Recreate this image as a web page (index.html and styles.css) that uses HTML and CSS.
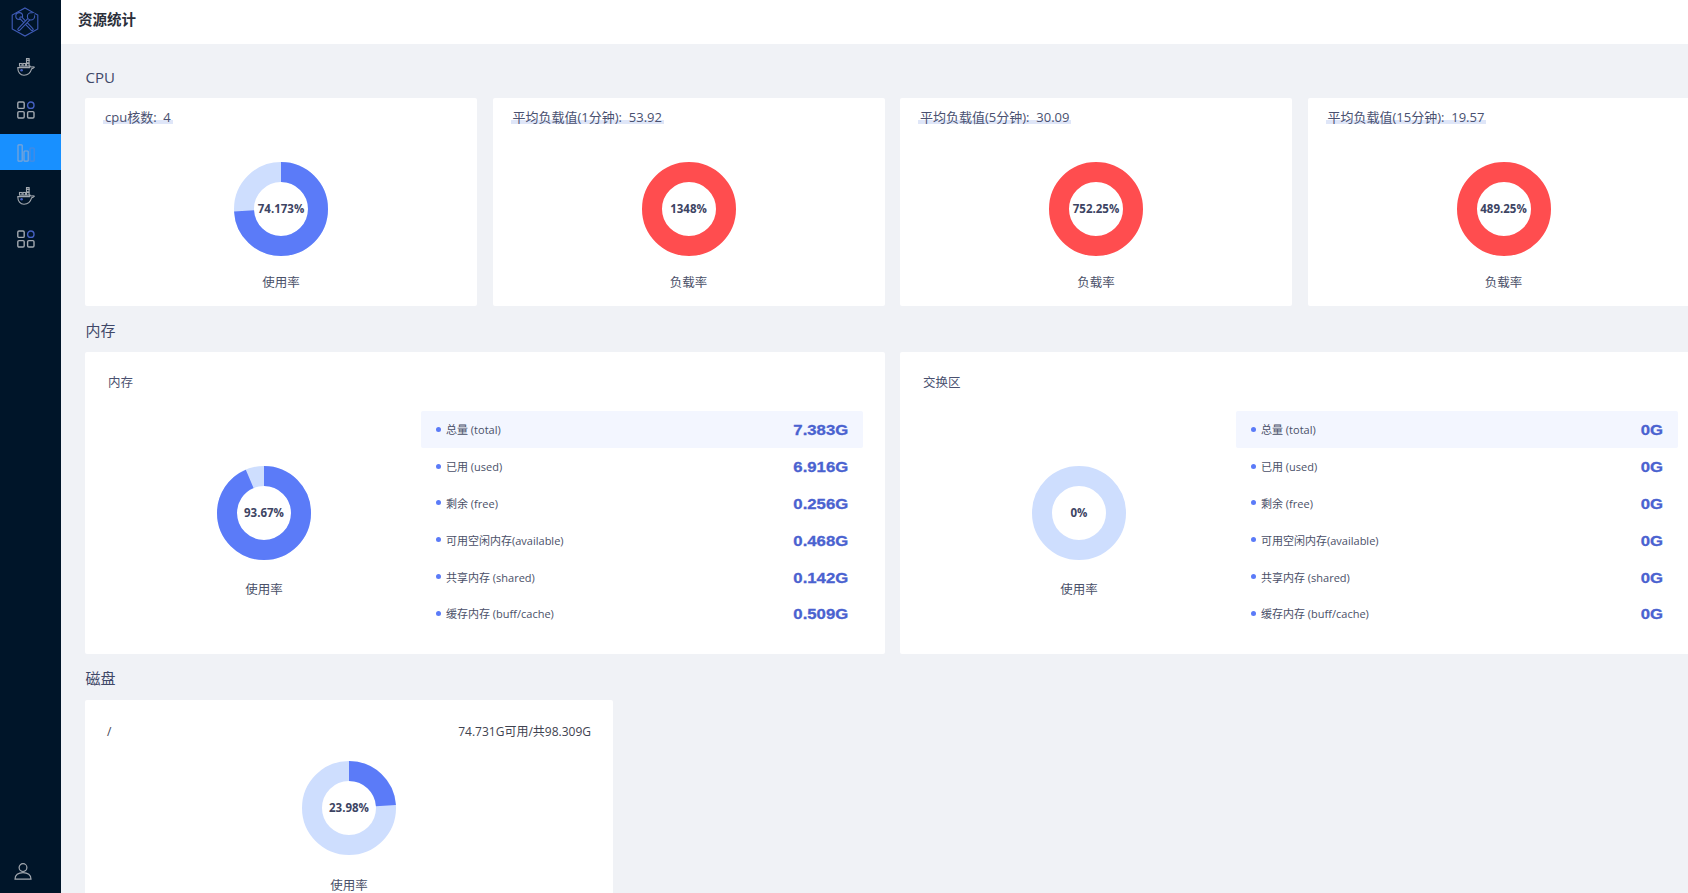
FILE: index.html
```html
<!DOCTYPE html>
<html lang="zh">
<head>
<meta charset="utf-8">
<title>资源统计</title>
<link rel="stylesheet" href="styles.css">
</head>
<body>
<svg class="defs" width="0" height="0" aria-hidden="true">
  <symbol id="i-docker" viewBox="0 0 18 18">
    <g fill="none" stroke="#a3a9b0" stroke-width="1.1">
      <rect x="2.5" y="5.5" width="2.6" height="2.6"/>
      <rect x="6" y="5.5" width="2.6" height="2.6"/>
      <rect x="9.5" y="5.5" width="2.6" height="2.6"/>
      <rect x="9.5" y="2.3" width="2.6" height="2.6"/>
      <rect x="9.5" y="0.5" width="2.6" height="1.8"/>
      <path d="M0.8 9.6H12.6V7.4C13 8.6 14 9.2 15 8.9C15.6 8.7 16.8 8.7 17.3 9.2C16.4 10.4 15.4 10.8 14.6 10.9C13.6 14.6 10.6 17.2 7 17.2C3.4 17.2 0.6 14 0.8 9.6Z"/>
    </g>
    <circle cx="4.6" cy="12.2" r="1.3" fill="#4561c4"/>
  </symbol>
  <symbol id="i-grid" viewBox="0 0 18 18">
    <g fill="none" stroke="#a3a9b0" stroke-width="1.4">
      <rect x="0.8" y="1" width="6.4" height="6.4" rx="1.2"/>
      <rect x="0.8" y="10.6" width="6.4" height="6.4" rx="1.2"/>
      <rect x="10.6" y="10.6" width="6.4" height="6.4" rx="1.2"/>
    </g>
    <circle cx="13.8" cy="4.2" r="3.2" fill="none" stroke="#4561c4" stroke-width="1.4"/>
  </symbol>
</svg>

<div class="app">
  <aside class="sidebar">
    <div class="logo">
      <svg width="28" height="30" viewBox="0 0 28 30" fill="none" stroke-linecap="round">
        <path d="M14 1L26.8 8V22L14 29L1.2 22V8Z" stroke="#3f5cb8" stroke-width="1.1"/>
        <circle cx="8.2" cy="9" r="3.4" stroke="#3f5cb8" stroke-width="1.1" fill="#001529"/>
        <path d="M10 11L21 22.4" stroke="#3f5cb8" stroke-width="3.4"/>
        <path d="M10 11L21 22.4" stroke="#001529" stroke-width="1.3"/>
        <path d="M19 11L8 22.4" stroke="#3f5cb8" stroke-width="3.4"/>
        <path d="M19 11L8 22.4" stroke="#001529" stroke-width="1.3"/>
        <circle cx="20" cy="9.4" r="3.6" stroke="#3f5cb8" stroke-width="1.1" fill="#001529"/>
        <path d="M21 6.6L23.8 5.4L23.2 9.2L20 9.6Z" fill="#001529"/>
        <path d="M18.6 11.4L19.8 10.6" stroke="#001529" stroke-width="1.3"/>
      </svg>
    </div>
    <nav class="nav">
      <a class="nav-item"><svg class="nav-icon"><use href="#i-docker"/></svg></a>
      <a class="nav-item"><svg class="nav-icon"><use href="#i-grid"/></svg></a>
      <a class="nav-item active">
        <svg class="nav-icon" viewBox="0 0 18 18" fill="none" stroke="#7fa6d6" stroke-width="1.2">
          <rect x="1" y="0.8" width="4.2" height="16.4" rx="0.8"/>
          <rect x="7" y="7" width="4.2" height="10.2" rx="0.8"/>
          <rect x="13" y="4" width="4.2" height="13.2" rx="0.8" stroke="#4a8ae0"/>
        </svg>
      </a>
      <a class="nav-item"><svg class="nav-icon"><use href="#i-docker"/></svg></a>
      <a class="nav-item"><svg class="nav-icon"><use href="#i-grid"/></svg></a>
    </nav>
    <div class="user">
      <svg width="18" height="17" viewBox="0 0 18 17" fill="none" stroke="#a3a9b0" stroke-width="1.2">
        <circle cx="9" cy="4.6" r="3.9"/>
        <path d="M1 16.2C0.8 12 4.4 9.6 9 9.6C13.6 9.6 17.2 12 17 16.2Z"/>
      </svg>
    </div>
  </aside>

  <main class="main">
    <header class="topbar">资源统计</header>
    <div class="content">
      <h2 class="section-title">CPU</h2>
      <section class="cpu-row">
        <article class="card cpu-card">
          <div class="cpu-head"><span class="mark">cpu核数:&nbsp;&nbsp;4</span></div>
          <div class="gauge">
            <div class="donut">
              <svg viewBox="0 0 94 94"><circle class="track" cx="47" cy="47" r="37"/><circle class="value" cx="47" cy="47" r="37" pathLength="100" stroke-dasharray="74.173 100"/></svg>
              <span class="donut-text">74.173%</span>
            </div>
            <div class="gauge-label">使用率</div>
          </div>
        </article>
        <article class="card cpu-card">
          <div class="cpu-head"><span class="mark">平均负载值(1分钟):&nbsp;&nbsp;53.92</span></div>
          <div class="gauge">
            <div class="donut">
              <svg viewBox="0 0 94 94"><circle class="over" cx="47" cy="47" r="37"/></svg>
              <span class="donut-text">1348%</span>
            </div>
            <div class="gauge-label">负载率</div>
          </div>
        </article>
        <article class="card cpu-card">
          <div class="cpu-head"><span class="mark">平均负载值(5分钟):&nbsp;&nbsp;30.09</span></div>
          <div class="gauge">
            <div class="donut">
              <svg viewBox="0 0 94 94"><circle class="over" cx="47" cy="47" r="37"/></svg>
              <span class="donut-text">752.25%</span>
            </div>
            <div class="gauge-label">负载率</div>
          </div>
        </article>
        <article class="card cpu-card">
          <div class="cpu-head"><span class="mark">平均负载值(15分钟):&nbsp;&nbsp;19.57</span></div>
          <div class="gauge">
            <div class="donut">
              <svg viewBox="0 0 94 94"><circle class="over" cx="47" cy="47" r="37"/></svg>
              <span class="donut-text">489.25%</span>
            </div>
            <div class="gauge-label">负载率</div>
          </div>
        </article>
      </section>

      <h2 class="section-title spaced">内存</h2>
      <section class="mem-row">
        <article class="card mem-card">
          <div class="mem-title">内存</div>
          <div class="mem-body">
            <div class="gauge wide">
              <div class="donut">
                <svg viewBox="0 0 94 94"><circle class="track" cx="47" cy="47" r="37"/><circle class="value" cx="47" cy="47" r="37" pathLength="100" stroke-dasharray="93.67 100"/></svg>
                <span class="donut-text">93.67%</span>
              </div>
              <div class="gauge-label">使用率</div>
            </div>
            <ul class="stats">
              <li class="stat"><span class="stat-name">总量 (total)</span><b class="stat-value">7.383G</b></li>
              <li class="stat"><span class="stat-name">已用 (used)</span><b class="stat-value">6.916G</b></li>
              <li class="stat"><span class="stat-name">剩余 (free)</span><b class="stat-value">0.256G</b></li>
              <li class="stat"><span class="stat-name">可用空闲内存(available)</span><b class="stat-value">0.468G</b></li>
              <li class="stat"><span class="stat-name">共享内存 (shared)</span><b class="stat-value">0.142G</b></li>
              <li class="stat"><span class="stat-name">缓存内存 (buff/cache)</span><b class="stat-value">0.509G</b></li>
            </ul>
          </div>
        </article>
        <article class="card mem-card">
          <div class="mem-title">交换区</div>
          <div class="mem-body">
            <div class="gauge wide">
              <div class="donut">
                <svg viewBox="0 0 94 94"><circle class="track" cx="47" cy="47" r="37"/></svg>
                <span class="donut-text">0%</span>
              </div>
              <div class="gauge-label">使用率</div>
            </div>
            <ul class="stats">
              <li class="stat"><span class="stat-name">总量 (total)</span><b class="stat-value">0G</b></li>
              <li class="stat"><span class="stat-name">已用 (used)</span><b class="stat-value">0G</b></li>
              <li class="stat"><span class="stat-name">剩余 (free)</span><b class="stat-value">0G</b></li>
              <li class="stat"><span class="stat-name">可用空闲内存(available)</span><b class="stat-value">0G</b></li>
              <li class="stat"><span class="stat-name">共享内存 (shared)</span><b class="stat-value">0G</b></li>
              <li class="stat"><span class="stat-name">缓存内存 (buff/cache)</span><b class="stat-value">0G</b></li>
            </ul>
          </div>
        </article>
      </section>

      <h2 class="section-title spaced">磁盘</h2>
      <article class="card disk-card">
        <div class="disk-head"><span>/</span><span>74.731G可用/共98.309G</span></div>
        <div class="gauge wide">
          <div class="donut">
            <svg viewBox="0 0 94 94"><circle class="track" cx="47" cy="47" r="37"/><circle class="value" cx="47" cy="47" r="37" pathLength="100" stroke-dasharray="23.98 100"/></svg>
            <span class="donut-text">23.98%</span>
          </div>
          <div class="gauge-label">使用率</div>
        </div>
      </article>
    </div>
  </main>
</div>
</body>
</html>
```

FILE: styles.css
```css
* { box-sizing: border-box; }
html, body { margin: 0; height: 100%; overflow: hidden; }
body {
  font-family: "Open Sans", "Noto Sans CJK SC", sans-serif;
  font-size: 14px;
  color: #4a5170;
  background: #f0f2f6;
}
.defs { position: absolute; }
.app { display: flex; height: 893px; }

.sidebar {
  flex: 0 0 61px;
  display: flex;
  flex-direction: column;
  background: #001529;
}
.logo { height: 48px; padding: 7px 0 0 11px; }
.logo svg { display: block; }
.nav { display: flex; flex-direction: column; gap: 7px; }
.nav-item {
  display: flex;
  align-items: center;
  height: 36px;
  padding: 2px 0 0 17px;
}
.nav-item.active { background: #1890ff; }
.nav-icon { width: 18px; height: 18px; display: block; }
.user { margin-top: auto; padding: 0 0 13px 14px; }
.user svg { display: block; }

.main { flex: 1; min-width: 0; overflow: hidden; }
.topbar {
  height: 44px;
  padding: 0 17px;
  line-height: 40px;
  background: #fff;
  font-size: 14.5px;
  font-weight: 700;
  color: #2b2f3a;
}
.content { padding: 22px 0 0 24px; }
.section-title {
  margin: 0 0 10px;
  padding-left: 0.5px;
  font-size: 15px;
  line-height: 22px;
  font-weight: 400;
  color: #3f4868;
}
.section-title.spaced { margin: 13px 0 11px; }

.card { background: #fff; border-radius: 2px; }
.cpu-row { display: grid; grid-template-columns: repeat(4, 392px); gap: 15.5px; }
.cpu-card { height: 208px; padding: 10px 18px 0; }
.cpu-head { height: 54px; line-height: 19px; font-size: 13px; }
.mark {
  padding: 0 2px;
  background: linear-gradient(#dfe6f8, #dfe6f8) no-repeat 0 12px / 100% 4px;
}
.gauge { display: flex; flex-direction: column; align-items: center; }
.donut { position: relative; width: 94px; height: 94px; }
.donut svg { display: block; width: 94px; height: 94px; transform: rotate(-90deg); }
.track, .value, .over { fill: none; stroke-width: 20; }
.track { stroke: #cedefe; }
.value { stroke: #5b7bf8; }
.over { stroke: #ff4d4f; }
.donut-text {
  position: absolute;
  inset: 0;
  display: flex;
  align-items: center;
  justify-content: center;
  padding-bottom: 2px;
  font-size: 11.5px;
  font-weight: 700;
  color: #3d4463;
}
.gauge-label { margin-top: 17px; line-height: 20px; font-size: 12.5px; color: #4a5068; }
.gauge.wide .gauge-label { margin-top: 20px; }

.mem-row { display: grid; grid-template-columns: repeat(2, 799.5px); gap: 15.5px; }
.mem-card { height: 302px; padding: 21px 22px 0; }
.mem-title { height: 38px; padding-left: 1px; line-height: 19px; font-size: 12.5px; }
.mem-body { display: grid; grid-template-columns: 314px 441.5px; }
.mem-body .gauge { padding-top: 55px; }
.stats { margin: 0; padding: 0; list-style: none; }
.stat {
  display: flex;
  align-items: center;
  justify-content: space-between;
  height: 36.8px;
  padding: 0 14px 0 15px;
  border-radius: 2px;
}
.stat:first-child { background: #f3f6ff; }
.stat-name {
  display: flex;
  align-items: center;
  gap: 5px;
  font-size: 11px;
  color: #4a5068;
}
.stat-name::before {
  content: "";
  width: 5px;
  height: 5px;
  border-radius: 50%;
  background: #5b7bf8;
}
.stat-value {
  display: inline-block;
  padding-top: 1px;
  font-family: "Liberation Sans", Arial, sans-serif;
  font-size: 15px;
  font-weight: 700;
  color: #4a62d0;
  -webkit-text-stroke: 0.3px #4a62d0;
  transform: scaleX(1.115);
  transform-origin: right center;
}

.disk-card { width: 528px; height: 220px; padding: 22px 22px 0 22px; }
.disk-card .gauge.wide .gauge-label { margin-top: 21px; }
.disk-head {
  display: flex;
  justify-content: space-between;
  height: 39px;
  line-height: 20px;
  font-size: 12px;
  color: #3f4350;
}
```
